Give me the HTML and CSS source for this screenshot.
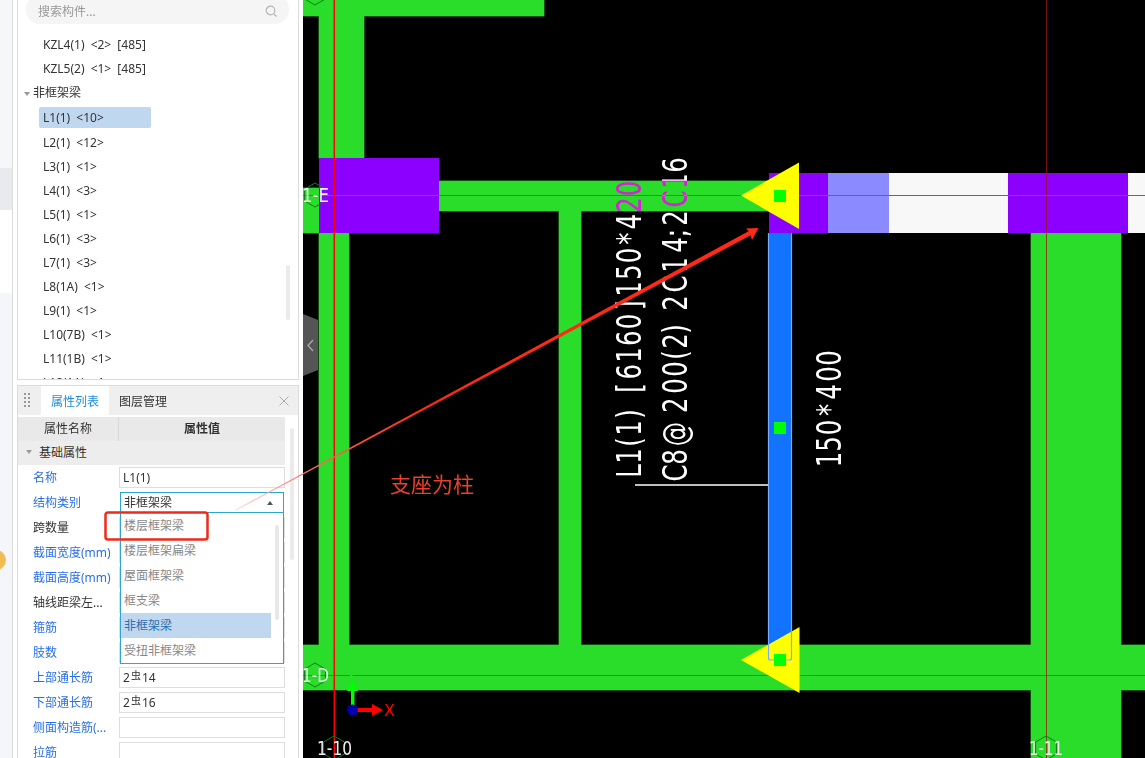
FILE: index.html
```html
<!DOCTYPE html>
<html lang="zh-CN">
  <head>
    <meta charset="UTF-8" />
    <title>属性列表</title>
    <link rel="stylesheet" href="styles.css">
  </head>
  <body>
    <div class="rail">
      <div class="rail-a"></div>
      <div class="rail-b"></div>
      <div class="rail-c"></div>
      <div class="rail-d"></div>
      <span class="rail-dot"></span>
    </div>

    <div class="side">
      <div class="tree-panel">
        <div class="search">
          <span>搜索构件...</span>
          <svg width="14" height="14" viewBox="0 0 14 14"><circle cx="6.5" cy="6.5" r="4.3"/><path d="M10 10l2.5 2.5"/></svg>
        </div>
        <div class="tree-row">KZL4(1) &lt;2&gt; [485]</div>
        <div class="tree-row">KZL5(2) &lt;1&gt; [485]</div>
        <div class="tree-group"><i class="caret"></i>非框架梁</div>
        <div class="tree-row selected"><span>L1(1) &lt;10&gt;</span></div>
        <div class="tree-row">L2(1) &lt;12&gt;</div>
        <div class="tree-row">L3(1) &lt;1&gt;</div>
        <div class="tree-row">L4(1) &lt;3&gt;</div>
        <div class="tree-row">L5(1) &lt;1&gt;</div>
        <div class="tree-row">L6(1) &lt;3&gt;</div>
        <div class="tree-row">L7(1) &lt;3&gt;</div>
        <div class="tree-row">L8(1A) &lt;1&gt;</div>
        <div class="tree-row">L9(1) &lt;1&gt;</div>
        <div class="tree-row">L10(7B) &lt;1&gt;</div>
        <div class="tree-row">L11(1B) &lt;1&gt;</div>
        <div class="tree-row">L12(1A) &lt;1&gt;</div>
        <div class="tree-scroll"></div>
      </div>

      <div class="props-panel">
        <div class="tabs">
          <svg class="grip" width="6" height="14" viewBox="0 0 6 14"><path d="M0 0h2v2H0zM4 0h2v2H4zM0 4h2v2H0zM4 4h2v2H4zM0 8h2v2H0zM4 8h2v2H4zM0 12h2v2H0zM4 12h2v2H4z"/></svg>
          <div class="tab active">属性列表</div>
          <div class="tab">图层管理</div>
          <svg class="close" width="10" height="10" viewBox="0 0 10 10"><path d="M.5.5l9 9M9.5.5l-9 9"/></svg>
        </div>
        <div class="table">
          <div class="table-head">
            <div>属性名称</div>
            <div class="strong">属性值</div>
          </div>
          <div class="section"><i class="caret"></i>基础属性</div>

          <div class="prop"><div class="name">名称</div><div class="value">L1(1)</div></div>
          <div class="prop">
            <div class="name">结构类别</div>
            <div class="combo">
              <div class="combo-input">非框架梁<i class="caret up"></i></div>
              <div class="combo-list">
                <div class="combo-item">楼层框架梁</div>
                <div class="combo-item">楼层框架扁梁</div>
                <div class="combo-item">屋面框架梁</div>
                <div class="combo-item">框支梁</div>
                <div class="combo-item current">非框架梁</div>
                <div class="combo-item">受扭非框架梁</div>
                <div class="combo-scroll"></div>
              </div>
            </div>
          </div>
          <div class="prop"><div class="name plain">跨数量</div><div class="value"></div></div>
          <div class="prop"><div class="name">截面宽度(mm)</div><div class="value"></div></div>
          <div class="prop"><div class="name">截面高度(mm)</div><div class="value"></div></div>
          <div class="prop"><div class="name plain">轴线距梁左...</div><div class="value"></div></div>
          <div class="prop"><div class="name">箍筋</div><div class="value"></div></div>
          <div class="prop"><div class="name">肢数</div><div class="value"></div></div>
          <div class="prop"><div class="name">上部通长筋</div><div class="value">2<sup>虫</sup>14</div></div>
          <div class="prop"><div class="name">下部通长筋</div><div class="value">2<sup>虫</sup>16</div></div>
          <div class="prop"><div class="name">侧面构造筋(...</div><div class="value"></div></div>
          <div class="prop"><div class="name">拉筋</div><div class="value"></div></div>
        </div>
        <div class="props-scroll"></div>
      </div>
    </div>

    <div class="canvas">
      <svg width="842" height="758" viewBox="303 0 842 758">
        <defs>
          <g id="beams">
            <rect x="303" y="-10" width="241" height="26"/>
            <rect x="319" y="16" width="45" height="142"/>
            <rect x="303" y="188" width="20" height="45"/>
            <rect x="439" y="181" width="332" height="30"/>
            <rect x="319" y="233" width="30" height="415"/>
            <rect x="559" y="211" width="22" height="437"/>
            <rect x="1031" y="233" width="90" height="530"/>
            <rect x="303" y="645" width="842" height="45"/>
          </g>
          <polygon id="hex" points="0,-12 10.4,-6 10.4,6 0,12 -10.4,6 -10.4,-6"/>
        </defs>

        <use href="#beams" class="beam-edge"/>
        <use href="#beams" class="beam-fill"/>

        <rect class="purple" x="319" y="158" width="120" height="75"/>
        <rect class="purple" x="769" y="173" width="59" height="60"/>
        <rect class="lilac" x="828" y="173" width="61" height="60"/>
        <rect class="blank" x="889" y="173" width="119" height="60"/>
        <rect class="purple" x="1008" y="173" width="120" height="60"/>
        <rect class="blank" x="1128" y="173" width="17" height="60"/>

        <rect class="blue" x="768.5" y="233" width="23" height="427" rx="2"/>

        <path class="axis thin" d="M303 195.5H1145M303 675.5H1145"/>
        <path class="axis dark" d="M1046.5 0V758"/>
        <path class="axis main" d="M334.3 0V758"/>

        <polygon class="flag" points="741,195.5 799,162.5 799,229"/>
        <polygon class="flag" points="741,660 799.5,627 799.5,693"/>
        <path class="blue-line" d="M768.500 233V658a2 2 0 0 0 2 2h19a2 2 0 0 0 2-2V233"/>
        <rect class="grip-pt" x="774" y="190" width="12" height="12"/>
        <rect class="grip-pt" x="774" y="422" width="12" height="12"/>
        <rect class="grip-pt" x="774" y="654" width="12" height="12"/>

        <path class="leader" d="M635 485H768"/>

        
        <text class="dim" transform="translate(641 478) rotate(-90) scale(.72 1)" x="9.7 30.6 50 69.4 88.9 105.600 125 147.700 170.900 194.100 217.300 240 262.700 285.900 309.100 332.500 355.900 379.100 402.300">L1(1) [6160]150*420</text>
        <text class="dim" transform="translate(687 480) rotate(-90) scale(.72 1)" x="9.7 31.900 64 104 130.600 154.200 173.600 193 209.700 227.800 245.800 272.200 298.600 326.400 343 363.900 390.300 415.300 437.500">C8@200(2) 2C14;2C16</text>
        <text class="dim" transform="translate(841 467) rotate(-90) scale(.72 1)" x="10.400 31.900 54.900 79.200 104.200 129.200 151.400">150*400</text>

        <use href="#hex" x="315" y="-7" class="hex"/>
        <use href="#hex" x="315" y="195" class="hex"/>
        <use href="#hex" x="315" y="675" class="hex"/>
        <use href="#hex" x="334" y="748" class="hex"/>
        <use href="#hex" x="1046" y="748" class="hex"/>
        <text class="grid-label" x="302" y="202" textLength="27" lengthAdjust="spacingAndGlyphs">1-E</text>
        <text class="grid-label" x="302" y="682" textLength="27" lengthAdjust="spacingAndGlyphs">1-D</text>
        <text class="grid-label" x="317" y="755" textLength="35" lengthAdjust="spacingAndGlyphs">1-10</text>
        <text class="grid-label" x="1029" y="755" textLength="34" lengthAdjust="spacingAndGlyphs">1-11</text>

        <text class="axis-y" x="347" y="681">Y</text>
        <path class="arrow-y" d="M351 705V691H347L352.500 680L358 691H354.500V705Z"/>
        <path class="arrow-x" d="M356 708H372V704L383 710L372 716V712H356Z"/>
        <circle class="origin" cx="352.500" cy="710" r="5.500"/>
        <text class="axis-x" x="384" y="716">X</text>

        <polygon class="handle" points="303,314 318,320 318,370 303,376"/>
        <path class="handle-arrow" d="M313 340l-5 5.500 5 5.500"/>
      </svg>
    </div>

    <div class="note">支座为柱</div>

    <svg class="markup" width="1145" height="758" viewBox="0 0 1145 758">
      <defs>
        <linearGradient id="fade" gradientUnits="userSpaceOnUse" x1="235" y1="510" x2="420" y2="410">
          <stop offset="0" stop-color="#ffd8d4"/>
          <stop offset="0.4" stop-color="#ff6a60"/>
          <stop offset="1" stop-color="#fe2a18"/>
        </linearGradient>
      </defs>
      <polygon fill="url(#fade)" points="235,510 235.400,510.800 752.100,234.500 749.900,230.500"/>
      <polygon class="markup-head" points="758.500,228 746,228.500 749.500,232 752,240"/>
      <rect class="markup-box" x="105.500" y="512.500" width="102" height="27" rx="2.500"/>
    </svg>
  </body>
</html>
```

FILE: styles.css
```css
html, body {
  margin: 0;
  height: 100%;
  overflow: hidden;
}
body {
  display: flex;
  width: 1145px;
  height: 758px;
  background: #fff;
  font-family: "Noto Sans", "Noto Sans CJK SC", sans-serif;
  font-size: 12px;
  color: #333;
}

/* left rail */
.rail {
  position: relative;
  width: 12px;
  height: 758px;
  border-right: 1px solid #dcdcdc;
  display: flex;
  flex-direction: column;
  overflow: hidden;
  flex-shrink: 0;
}
.rail-a { height: 168px; background: #f6f7f9; }
.rail-b { height: 42px; background: #e9eaee; }
.rail-c { height: 83px; background: #fff; }
.rail-d { flex: 1; background: #f5f6f9; }
.rail-dot {
  position: absolute;
  left: -14px;
  top: 550px;
  width: 20px;
  height: 20px;
  border-radius: 50%;
  background: #f0bd55;
}

/* side column */
.side {
  width: 282px;
  margin-left: 4px;
  margin-right: 4px;
  flex-shrink: 0;
}
.tree-panel {
  position: relative;
  height: 380px;
  box-sizing: border-box;
  border: 1px solid #dcdcdc;
  border-top: none;
  overflow: hidden;
}
.search {
  height: 29px;
  box-sizing: border-box;
  margin: -5px 9px 9px 8px;
  padding: 3px 11px 0 12px;
  background: #f5f5f5;
  border-radius: 14px;
  display: flex;
  align-items: center;
  justify-content: space-between;
  color: #999;
}
.search svg {
  fill: none;
  stroke: #b5b5b5;
  stroke-width: 1.2;
}
.tree-row,
.tree-group {
  height: 24px;
  line-height: 24px;
  padding-left: 25px;
  white-space: pre;
  word-spacing: 3px;
}
.tree-group {
  padding-left: 15px;
  position: relative;
}
.tree-row.selected {
  padding-left: 21px;
}
.tree-row.selected span {
  display: block;
  width: 108px;
  height: 21px;
  line-height: 21px;
  margin-top: 2px;
  padding-left: 4px;
  background: #c0d7f0;
  border-radius: 2px;
}
.tree-scroll {
  position: absolute;
  left: 268px;
  top: 265px;
  width: 4px;
  height: 55px;
  background: #ebebeb;
  border-radius: 2px;
}
.caret {
  display: inline-block;
  width: 0;
  height: 0;
  border-left: 3.5px solid transparent;
  border-right: 3.5px solid transparent;
  border-top: 4px solid #999;
}
.tree-group .caret {
  position: absolute;
  left: 6px;
  top: 11px;
}

/* properties */
.props-panel {
  position: relative;
  height: 373px;
  margin-top: 5px;
  box-sizing: border-box;
  border: 1px solid #dcdcdc;
  border-bottom: none;
  overflow: hidden;
}
.tabs {
  height: 29px;
  background: #efefef;
  display: flex;
  align-items: stretch;
}
.grip {
  fill: #999;
  margin: 7px 0 0 6px;
}
.tab {
  line-height: 31px;
  width: 48px;
  margin-left: 8px;
  text-align: center;
}
.tab.active {
  width: 68px;
  background: #fff;
  color: #1d8ce0;
  margin: 0 2px 0 11px;
}
.close {
  fill: none;
  stroke: #aaa;
  stroke-width: 1;
  margin: 10px 9px 0 auto;
}
.table {
  width: 267px;
  margin-top: 2px;
}
.table-head {
  display: grid;
  grid-template-columns: 100px 167px;
  height: 24px;
  line-height: 24px;
  background: #e9e9e9;
  text-align: center;
}
.table-head div + div {
  border-left: 1px solid #d8d8d8;
}
.strong {
  font-weight: 600;
}
.section {
  position: relative;
  height: 24px;
  line-height: 24px;
  padding-left: 21px;
  background: #ededed;
}
.section .caret {
  position: absolute;
  left: 8px;
  top: 9px;
}
.prop {
  display: grid;
  grid-template-columns: 101px 166px;
  height: 25px;
  padding-top: 1px;
  box-sizing: border-box;
  line-height: 24px;
}
.name {
  padding-left: 15px;
  color: #2a6fe8;
  white-space: nowrap;
}
.name.plain {
  color: #333;
}
.value {
  height: 21px;
  box-sizing: border-box;
  margin-top: 1px;
  padding-left: 3px;
  line-height: 19px;
  border: 1px solid #dedede;
}
.value sup {
  font-size: 10px;
  line-height: 0;
  margin: 0 1px;
  vertical-align: 3px;
}
.combo {
  position: relative;
  margin: 1px 1px 0;
}
.combo-input {
  height: 21px;
  box-sizing: border-box;
  padding-left: 3px;
  line-height: 19px;
  border: 1px solid #2ea5d0;
  position: relative;
}
.caret.up {
  position: absolute;
  right: 10px;
  top: 8px;
  border-top: none;
  border-bottom: 4px solid #555;
}
.combo-list {
  position: absolute;
  z-index: 2;
  left: 0;
  right: 0;
  top: 21px;
  height: 151px;
  box-sizing: border-box;
  border: 1px solid #2ea5d0;
  border-top: none;
  background: #fff;
}
.combo-item {
  width: 150px;
  height: 25px;
  line-height: 25px;
  padding-left: 3px;
  box-sizing: border-box;
  color: #888;
}
.combo-item.current {
  background: #c0d7f0;
  color: #2a6fb0;
}
.combo-scroll {
  position: absolute;
  left: 154px;
  top: 12px;
  width: 4px;
  height: 95px;
  background: #e8e8e8;
  border-radius: 2px;
}
.props-scroll {
  position: absolute;
  left: 272px;
  top: 42px;
  width: 4px;
  height: 132px;
  background: #ebebeb;
  border-radius: 2px;
}

/* canvas */
.canvas {
  width: 842px;
  height: 758px;
  background: #000;
  flex-shrink: 0;
}
.canvas svg {
  display: block;
}
.beam-edge { fill: #1f9a1f; stroke: #1f9a1f; stroke-width: 1; }
.beam-fill { fill: #2bdd2b; }
.purple { fill: #8c00ff; }
.lilac { fill: #8b8bff; }
.blank { fill: #f8f8f8; }
.blue { fill: #1273ff; }
.blue-line { fill: none; stroke: #79acff; stroke-width: 1.2; }
.axis { fill: none; }
.axis.thin { stroke: #e8322a; stroke-width: 1; }
.axis.dark { stroke: #a01510; stroke-width: 1; opacity: .75; }
.axis.main { stroke: #ff0000; stroke-width: 1.5; }
.flag { fill: #ffff00; }
.grip-pt { fill: #00ff00; }
.leader { stroke: #fff; stroke-width: 1.5; fill: none; }
.dim {
  font-family: "DejaVu Sans", sans-serif;
  font-size: 34px;
  text-anchor: middle;
  fill: #fff;
  mix-blend-mode: difference;
}
.hex { fill: none; stroke: #0f7d0f; stroke-width: 1; }
.grid-label {
  font-family: "DejaVu Sans", sans-serif;
  font-size: 19px;
  fill: #eee;
}
.axis-y {
  font-family: "DejaVu Sans", sans-serif;
  font-size: 14px;
  fill: #22e422;
}
.axis-x {
  font-family: "DejaVu Sans", sans-serif;
  font-size: 16px;
  fill: #ff0000;
}
.arrow-y { fill: #00ff00; }
.arrow-x { fill: #ff0000; }
.origin { fill: #0000b0; }
.handle { fill: #555; }
.handle-arrow { fill: none; stroke: #aaa; stroke-width: 1.3; }

/* annotations over the screenshot */
.note {
  position: absolute;
  left: 390px;
  top: 470px;
  font-size: 21px;
  line-height: 28px;
  color: #e8402a;
}
.markup {
  position: absolute;
  left: 0;
  top: 0;
  z-index: 3;
  pointer-events: none;
}
.markup-head { fill: #fe2a18; }
.markup-box {
  fill: none;
  stroke: #f02a1a;
  stroke-width: 2.5;
}
```
